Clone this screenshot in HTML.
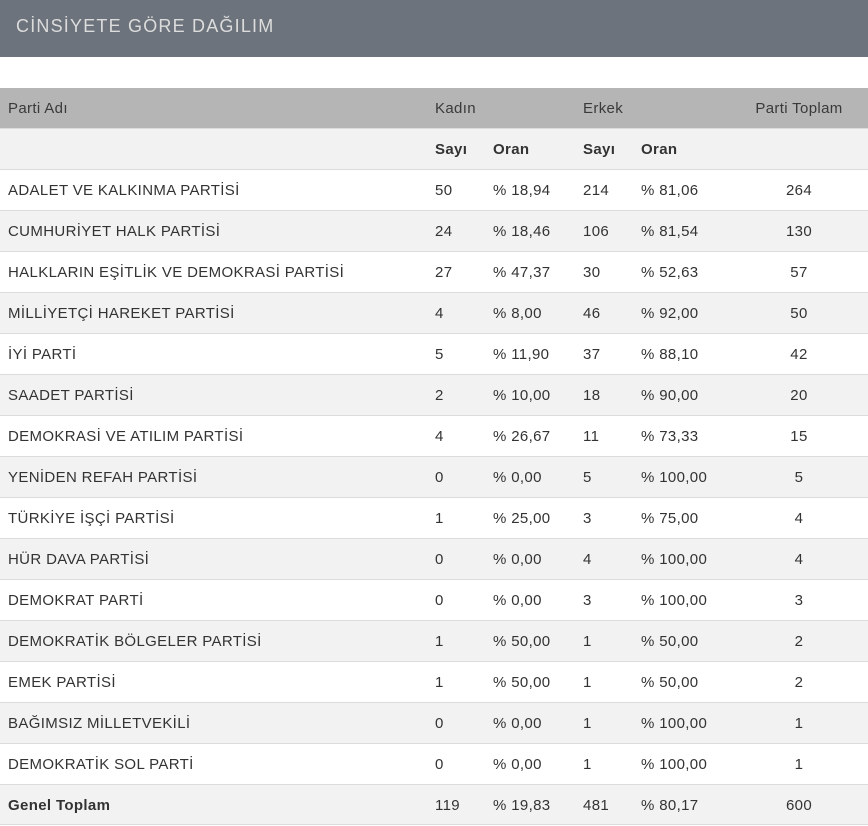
<!DOCTYPE html>
<html><head><meta charset="utf-8"><style>
*{margin:0;padding:0;box-sizing:border-box}
body{width:868px;height:826px;background:#fff;font-family:"Liberation Sans",sans-serif;color:#333;position:relative;overflow:hidden}
.hd{position:absolute;left:0;top:0;width:868px;height:57px;background:#6c737c;color:#dcdcdc;font-size:18px;letter-spacing:1.2px;padding:16px 0 0 16px}
.r{position:absolute;left:0;width:868px;height:41px;border-top:1px solid #dcdcdc;font-size:15px;letter-spacing:0.35px}
.r span{position:absolute;top:12px;white-space:nowrap}
.a{left:8px}.b{left:435px}.c{left:493px}.d{left:583px}.e{left:641px}.f{left:740px;width:118px;text-align:center}
.g{background:#f2f2f2}
.bold{font-weight:bold}
</style></head><body>
<div class="hd">CİNSİYETE GÖRE DAĞILIM</div>
<div class="r" style="top:88px;height:40px;background:#b5b5b5;border:none;color:#3a3a3a"><span class="a">Parti Adı</span><span class="b">Kadın</span><span class="d">Erkek</span><span class="f" style="left:740px">Parti Toplam</span></div>
<div class="r g bold" style="top:128px"><span class="b">Sayı</span><span class="c">Oran</span><span class="d">Sayı</span><span class="e">Oran</span></div>
<div class="r" style="top:169px"><span class="a">ADALET VE KALKINMA PARTİSİ</span><span class="b">50</span><span class="c">% 18,94</span><span class="d">214</span><span class="e">% 81,06</span><span class="f">264</span></div>
<div class="r g" style="top:210px"><span class="a">CUMHURİYET HALK PARTİSİ</span><span class="b">24</span><span class="c">% 18,46</span><span class="d">106</span><span class="e">% 81,54</span><span class="f">130</span></div>
<div class="r" style="top:251px"><span class="a">HALKLARIN EŞİTLİK VE DEMOKRASİ PARTİSİ</span><span class="b">27</span><span class="c">% 47,37</span><span class="d">30</span><span class="e">% 52,63</span><span class="f">57</span></div>
<div class="r g" style="top:292px"><span class="a">MİLLİYETÇİ HAREKET PARTİSİ</span><span class="b">4</span><span class="c">% 8,00</span><span class="d">46</span><span class="e">% 92,00</span><span class="f">50</span></div>
<div class="r" style="top:333px"><span class="a">İYİ PARTİ</span><span class="b">5</span><span class="c">% 11,90</span><span class="d">37</span><span class="e">% 88,10</span><span class="f">42</span></div>
<div class="r g" style="top:374px"><span class="a">SAADET PARTİSİ</span><span class="b">2</span><span class="c">% 10,00</span><span class="d">18</span><span class="e">% 90,00</span><span class="f">20</span></div>
<div class="r" style="top:415px"><span class="a">DEMOKRASİ VE ATILIM PARTİSİ</span><span class="b">4</span><span class="c">% 26,67</span><span class="d">11</span><span class="e">% 73,33</span><span class="f">15</span></div>
<div class="r g" style="top:456px"><span class="a">YENİDEN REFAH PARTİSİ</span><span class="b">0</span><span class="c">% 0,00</span><span class="d">5</span><span class="e">% 100,00</span><span class="f">5</span></div>
<div class="r" style="top:497px"><span class="a">TÜRKİYE İŞÇİ PARTİSİ</span><span class="b">1</span><span class="c">% 25,00</span><span class="d">3</span><span class="e">% 75,00</span><span class="f">4</span></div>
<div class="r g" style="top:538px"><span class="a">HÜR DAVA PARTİSİ</span><span class="b">0</span><span class="c">% 0,00</span><span class="d">4</span><span class="e">% 100,00</span><span class="f">4</span></div>
<div class="r" style="top:579px"><span class="a">DEMOKRAT PARTİ</span><span class="b">0</span><span class="c">% 0,00</span><span class="d">3</span><span class="e">% 100,00</span><span class="f">3</span></div>
<div class="r g" style="top:620px"><span class="a">DEMOKRATİK BÖLGELER PARTİSİ</span><span class="b">1</span><span class="c">% 50,00</span><span class="d">1</span><span class="e">% 50,00</span><span class="f">2</span></div>
<div class="r" style="top:661px"><span class="a">EMEK PARTİSİ</span><span class="b">1</span><span class="c">% 50,00</span><span class="d">1</span><span class="e">% 50,00</span><span class="f">2</span></div>
<div class="r g" style="top:702px"><span class="a">BAĞIMSIZ MİLLETVEKİLİ</span><span class="b">0</span><span class="c">% 0,00</span><span class="d">1</span><span class="e">% 100,00</span><span class="f">1</span></div>
<div class="r" style="top:743px"><span class="a">DEMOKRATİK SOL PARTİ</span><span class="b">0</span><span class="c">% 0,00</span><span class="d">1</span><span class="e">% 100,00</span><span class="f">1</span></div>
<div class="r g" style="top:784px;border-bottom:1px solid #dcdcdc"><span class="a bold">Genel Toplam</span><span class="b">119</span><span class="c">% 19,83</span><span class="d">481</span><span class="e">% 80,17</span><span class="f">600</span></div>
</body></html>
